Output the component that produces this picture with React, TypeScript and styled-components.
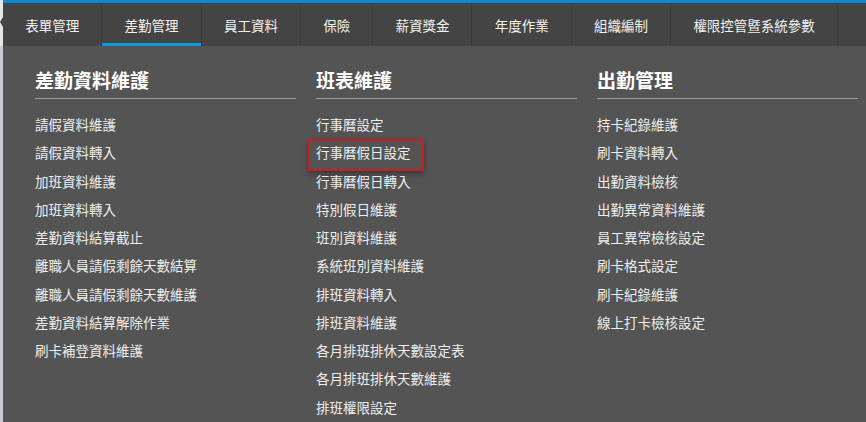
import React from "react";
import styled, { createGlobalStyle } from "styled-components";

const Global = createGlobalStyle`
  html, body { margin: 0; padding: 0; background: #545454; }
  body { font-family: "Noto Sans CJK TC", "Noto Sans", sans-serif; }
  * { box-sizing: border-box; }
`;

const Page = styled.div`
  display: flex;
  width: 866px;
  height: 422px;
  overflow: hidden;
  background: #545454;
`;

const LeftStrip = styled.div`
  position: relative;
  width: 3px;
  flex: none;
  display: flex;
  flex-direction: column;
  &::after {
    content: "";
    position: absolute;
    left: 0;
    top: 17px;
    border-top: 5px solid transparent;
    border-bottom: 5px solid transparent;
    border-right: 3px solid #444;
  }
`;

const StripTop = styled.div`
  height: 46px;
  background: #e6e6e6;
`;

const StripBottom = styled.div`
  flex: 1;
  background: #c8cbd0;
`;

const Main = styled.div`
  flex: 1;
  display: flex;
  flex-direction: column;
`;

const TopBar = styled.div`
  height: 3px;
  background: #0a88d2;
`;

const Nav = styled.nav`
  display: flex;
  height: 43px;
  background: #444444;
`;

const NavItem = styled.div<{ $active?: boolean }>`
  position: relative;
  display: flex;
  align-items: center;
  justify-content: center;
  padding: 0 22px 0 22.3px;
  border-right: 1px solid #3a3a3a;
  color: #f2f2f2;
  font-size: 13.5px;
  white-space: nowrap;
  &::after {
    content: "";
    position: absolute;
    left: 0;
    right: 0;
    bottom: 0;
    height: 3px;
    background: ${(p) => (p.$active ? "#0b98de" : "transparent")};
  }
`;

const Panel = styled.div`
  display: grid;
  grid-template-columns: repeat(3, 261px);
  column-gap: 20px;
  padding: 21px 8px 0 32px;
`;

const Column = styled.div`
  display: flex;
  flex-direction: column;
`;

const Heading = styled.div`
  font-size: 19px;
  font-weight: 700;
  line-height: 26px;
  color: #ffffff;
  padding-bottom: 5px;
  border-bottom: 1px solid #a0a0a0;
  white-space: nowrap;
`;

const List = styled.div`
  display: flex;
  flex-direction: column;
  padding-top: 11px;
`;

const Item = styled.div`
  position: relative;
  height: 28.25px;
  line-height: 28.25px;
  font-size: 13.5px;
  color: #eeeeee;
  white-space: nowrap;
`;

const Highlight = styled.span`
  position: absolute;
  left: -8px;
  top: 1px;
  width: 116px;
  height: 32px;
  border: 2px solid #c81e1e;
  box-shadow: 0 3px 6px rgba(0, 0, 0, 0.35);
  pointer-events: none;
`;

const navItems = [
  "表單管理",
  "差勤管理",
  "員工資料",
  "保險",
  "薪資獎金",
  "年度作業",
  "組織編制",
  "權限控管暨系統參數",
];

const columns: { title: string; items: string[]; highlight?: number }[] = [
  {
    title: "差勤資料維護",
    items: [
      "請假資料維護",
      "請假資料轉入",
      "加班資料維護",
      "加班資料轉入",
      "差勤資料結算截止",
      "離職人員請假剩餘天數結算",
      "離職人員請假剩餘天數維護",
      "差勤資料結算解除作業",
      "刷卡補登資料維護",
    ],
  },
  {
    title: "班表維護",
    highlight: 1,
    items: [
      "行事曆設定",
      "行事曆假日設定",
      "行事曆假日轉入",
      "特別假日維護",
      "班別資料維護",
      "系統班別資料維護",
      "排班資料轉入",
      "排班資料維護",
      "各月排班排休天數設定表",
      "各月排班排休天數維護",
      "排班權限設定",
    ],
  },
  {
    title: "出勤管理",
    items: [
      "持卡紀錄維護",
      "刷卡資料轉入",
      "出勤資料檢核",
      "出勤異常資料維護",
      "員工異常檢核設定",
      "刷卡格式設定",
      "刷卡紀錄維護",
      "線上打卡檢核設定",
    ],
  },
];

export default function App() {
  return (
    <>
      <Global />
      <Page>
        <LeftStrip>
          <StripTop />
          <StripBottom />
        </LeftStrip>
        <Main>
          <TopBar />
          <Nav>
            {navItems.map((n, i) => (
              <NavItem key={n} $active={i === 1}>
                {n}
              </NavItem>
            ))}
          </Nav>
          <Panel>
            {columns.map((c) => (
              <Column key={c.title}>
                <Heading>{c.title}</Heading>
                <List>
                  {c.items.map((it, i) => (
                    <Item key={it}>
                      {it}
                      {c.highlight === i && <Highlight />}
                    </Item>
                  ))}
                </List>
              </Column>
            ))}
          </Panel>
        </Main>
      </Page>
    </>
  );
}
